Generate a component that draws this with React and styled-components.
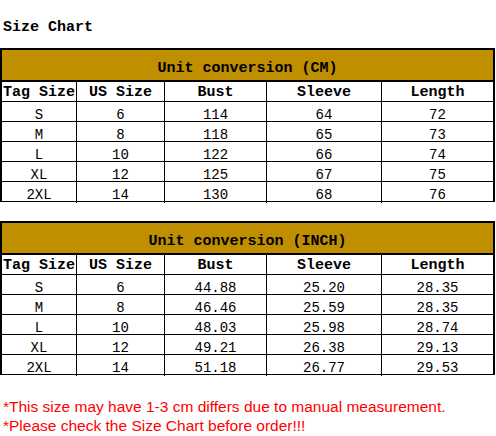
import styled, { createGlobalStyle } from "styled-components";

const GlobalStyle = createGlobalStyle`
  html, body {
    margin: 0;
    padding: 0;
    background: #ffffff;
  }
`;

const cmRows = [
  ['S', '6', '114', '64', '72'],
  ['M', '8', '118', '65', '73'],
  ['L', '10', '122', '66', '74'],
  ['XL', '12', '125', '67', '75'],
  ['2XL', '14', '130', '68', '76'],
];

const inchRows = [
  ['S', '6', '44.88', '25.20', '28.35'],
  ['M', '8', '46.46', '25.59', '28.35'],
  ['L', '10', '48.03', '25.98', '28.74'],
  ['XL', '12', '49.21', '26.38', '29.13'],
  ['2XL', '14', '51.18', '26.77', '29.53'],
];

const columns = ['Tag Size', 'US Size', 'Bust', 'Sleeve', 'Length'];

const SizeTable = ({ unit, rows }) => (
  <Table>
    <Caption>Unit conversion ({unit})</Caption>
    <Row>
      {columns.map(col => <Cell key={col} head>{col}</Cell>)}
    </Row>
    {rows.map(row => (
      <Row key={row[0]}>
        {row.map((value, i) => <Cell key={i}>{value}</Cell>)}
      </Row>
    ))}
  </Table>
);

const App = () => (
  <Page>
    <GlobalStyle />
    <Title>Size Chart</Title>
    <SizeTable unit="CM" rows={cmRows} />
    <SizeTable unit="INCH" rows={inchRows} />
    <Notes>
      <p>*This size may have 1-3 cm differs due to manual measurement.</p>
      <p>*Please check the Size Chart before order!!!</p>
    </Notes>
  </Page>
);

export default App;

const Page = styled.div`
  width: 496px;
  display: flex;
  flex-direction: column;
  font-family: "Liberation Mono", "DejaVu Sans Mono", monospace;
  color: #000;
`;

const Title = styled.h1`
  margin: 0;
  height: 48px;
  box-sizing: border-box;
  padding: 19px 0 0 3px;
  font-size: 15px;
  line-height: 17px;
  font-weight: bold;
`;

const Table = styled.div`
  width: 495px;
  box-sizing: border-box;
  border: 2px solid #000;
  border-bottom: none;

  & + & {
    margin-top: 19px;
  }
`;

const Caption = styled.div`
  height: 32px;
  box-sizing: border-box;
  border-bottom: 2px solid #000;
  background: #bf8f00;
  display: flex;
  align-items: center;
  justify-content: center;
  padding-top: 6px;
  font-size: 15px;
  font-weight: bold;
`;

const Row = styled.div`
  display: grid;
  grid-template-columns: 75px 88px 102px 115px 1fr;
  height: 20px;
  box-sizing: border-box;
  border-bottom: 1px solid #000;
`;

const Cell = styled.div`
  display: flex;
  justify-content: center;
  align-items: flex-start;
  padding-top: ${props => props.head ? '3px' : '5px'};
  box-sizing: border-box;
  border-right: 1px solid #000;
  font-size: ${props => props.head ? '15px' : '14px'};
  line-height: 16px;
  font-weight: ${props => props.head ? 'bold' : 'normal'};
  white-space: nowrap;

  &:last-child {
    border-right: none;
  }
`;

const Notes = styled.div`
  margin-top: 22px;
  padding-left: 3px;
  font-family: "Liberation Sans", Arial, sans-serif;
  font-size: 15.5px;
  line-height: 19px;
  color: #ff0000;

  > p {
    margin: 0;
  }
`;
